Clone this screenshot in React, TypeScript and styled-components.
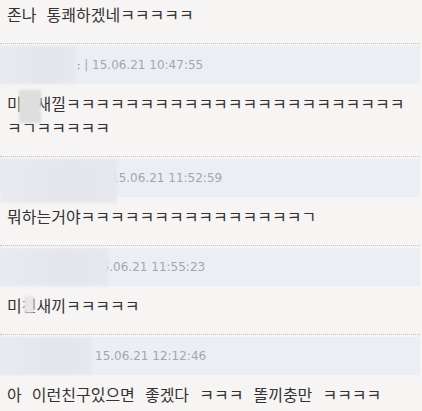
import React from "react";
import styled, { createGlobalStyle } from "styled-components";

const Global = createGlobalStyle`
  html, body { margin: 0; padding: 0; background: #f6f5f3; }
  body { overflow: hidden; }
`;

const List = styled.div`
  margin: -5px 2px 0 0;
  display: flex;
  flex-direction: column;
`;

const Item = styled.div<{ $first?: boolean }>`
  border-top: ${(p) => (p.$first ? "none" : "1px dotted #c2c2c2")};
  padding-top: ${(p) => (p.$first ? 0 : 2)}px;
`;

const Header = styled.div<{ $indent: number }>`
  position: relative;
  height: 38px;
  display: flex;
  align-items: center;
  padding-left: ${(p) => p.$indent}px;
  background: #eceef5;
`;

const NameBlur = styled.div<{ $w: number; $h: number }>`
  position: absolute;
  left: 0;
  top: 0;
  width: ${(p) => p.$w}px;
  height: ${(p) => p.$h}px;
  background: linear-gradient(90deg, #e9eaef 0%, #e4e6ec 60%, #e7e8ed 100%);
  filter: blur(1.5px);
  z-index: 1;
`;

const Meta = styled.span`
  font-family: "DejaVu Sans", Verdana, sans-serif;
  font-size: 12px;
  color: #a6a6a6;
  white-space: pre;
`;

const NameTail = styled.span`
  color: #5d7298;
  font-size: 10px;
`;

const Body = styled.div<{ $first?: boolean }>`
  padding: 7px 6px 17px 7px;
  font-family: "Noto Sans CJK KR", "Noto Sans", sans-serif;
  font-size: 16px;
  line-height: 24px;
  word-spacing: 6.5px;
  color: #333;
`;

const Censor = styled.span<{ $l: number; $t: number; $w: number; $h: number; $c: string }>`
  position: relative;
  display: inline-block;
  &::after {
    content: "";
    position: absolute;
    left: ${(p) => p.$l}px;
    top: ${(p) => p.$t}px;
    width: ${(p) => p.$w}px;
    height: ${(p) => p.$h}px;
    background: ${(p) => p.$c};
    filter: blur(0.8px);
  }
`;

const k = (n: number) => "ㅋ".repeat(n);

export default function App() {
  return (
    <>
      <Global />
      <List>
        <Item $first>
          <Body $first>존나 통쾌하겠네{k(5)}</Body>
        </Item>

        <Item>
          <Header $indent={77}>
            <NameBlur $w={75} $h={38} />
            <Meta>
              <NameTail>:</NameTail> | 15.06.21 10:47:55
            </Meta>
          </Header>
          <Body>
            미
            <Censor $l={-3} $t={-1} $w={22} $h={33} $c="#dedede">친</Censor>
            새낄{k(23)}ㅋㄱ{k(5)}
          </Body>
        </Item>

        <Item>
          <Header $indent={111}>
            <NameBlur $w={117} $h={44} />
            <Meta>15.06.21 11:52:59</Meta>
          </Header>
          <Body>뭐하는거야{k(15)}ㄱ</Body>
        </Item>

        <Item>
          <Header $indent={94}>
            <NameBlur $w={108} $h={38} />
            <Meta>15.06.21 11:55:23</Meta>
          </Header>
          <Body>
            미
            <Censor $l={2} $t={3} $w={10} $h={17} $c="#e6e6e8">친</Censor>
            새끼{k(5)}
          </Body>
        </Item>

        <Item>
          <Header $indent={95}>
            <NameBlur $w={92} $h={38} />
            <Meta>15.06.21 12:12:46</Meta>
          </Header>
          <Body>아 이런친구있으면 좋겠다 {k(3)} 똘끼충만 {k(4)}</Body>
        </Item>
      </List>
    </>
  );
}
